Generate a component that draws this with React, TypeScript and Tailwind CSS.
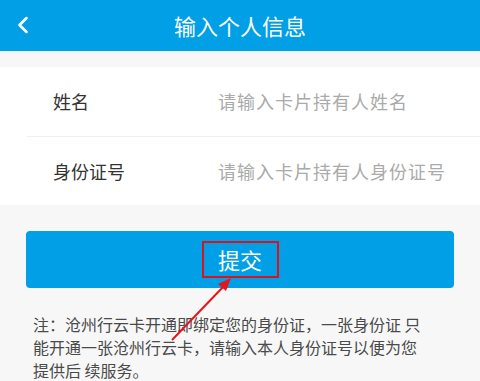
import { ChevronLeft } from "lucide-react";

const font = { fontFamily: '"Noto Sans CJK SC", "Noto Sans", sans-serif' };

function Row({ label, placeholder }: { label: string; placeholder: string }) {
  return (
    <div className="flex items-center h-full">
      <div className="w-[218px] pl-[53px] text-[18px] text-[#333]">{label}</div>
      <div className="text-[18px] tracking-[1px] text-[#aaa]">{placeholder}</div>
    </div>
  );
}

export default function App() {
  return (
    <div className="relative w-[480px] h-[381px] bg-[#f7f7f7] overflow-hidden" style={font}>
      <div className="relative flex items-center justify-center h-[51px] bg-[#009fe6] text-white">
        <ChevronLeft className="absolute left-[9px] top-[11px]" size={28} strokeWidth={2.2} />
        <span className="text-[22px]">输入个人信息</span>
      </div>

      <div className="mt-[16px] bg-white">
        <div className="h-[69px]">
          <Row label="姓名" placeholder="请输入卡片持有人姓名" />
        </div>
        <div className="ml-[27px] h-px bg-[#f0f0f0]" />
        <div className="h-[68px]">
          <Row label="身份证号" placeholder="请输入卡片持有人身份证号" />
        </div>
      </div>

      <div className="px-[26px] mt-[26px]">
        <button className="w-full h-[57px] rounded-[4px] bg-[#009fe6] flex items-center justify-center">
          <span className="flex items-center justify-center w-[77px] h-[37px] border-2 border-[#d9141e] text-white text-[22px]">
            提交
          </span>
        </button>
      </div>

      <p className="mt-[25px] px-[33px] text-[16px] leading-[23px] text-[#4a4a4a]">
        注：沧州行云卡开通即绑定您的身份证，一张身份证 只
        <br />
        能开通一张沧州行云卡，请输入本人身份证号以便为您
        <br />
        提供后 续服务。
      </p>

      <svg className="absolute left-0 top-0 pointer-events-none" width="480" height="381">
        <line x1="172" y1="340" x2="224" y2="286" stroke="#e8141c" strokeWidth="2" />
        <polygon points="231,278 218,284 226,291" fill="#e8141c" />
      </svg>
    </div>
  );
}
